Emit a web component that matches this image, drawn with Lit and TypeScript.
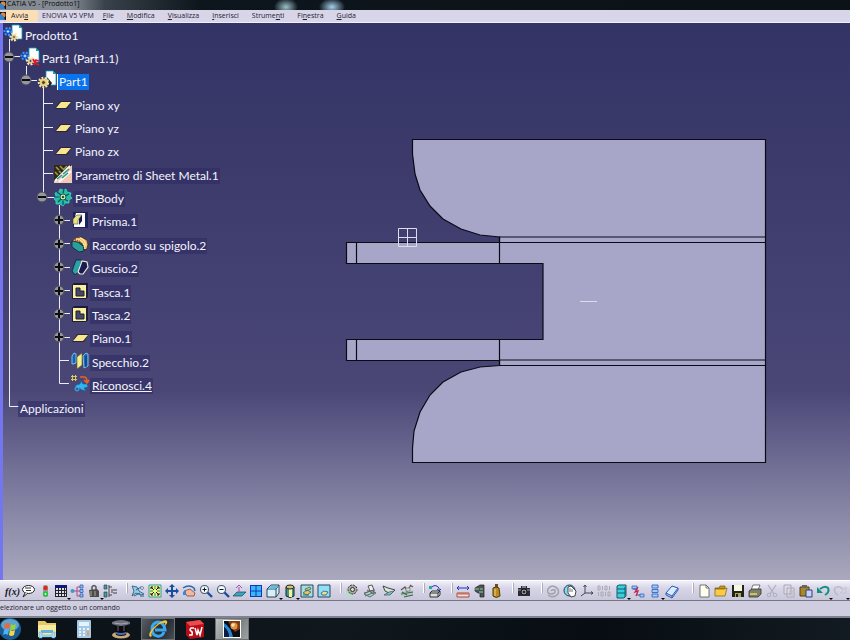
import { LitElement, html, svg, css, nothing } from "lit";
import { customElement } from "lit/decorators.js";
import { classMap } from "lit/directives/class-map.js";

const gear = (x: number, y: number, r: number, fill: string, edge: string, hole: string) => svg`
  <circle cx=${x} cy=${y} r=${r} fill="none" stroke=${edge} stroke-width="3" stroke-dasharray="1.7 1.2"/>
  <circle cx=${x} cy=${y} r=${r - 0.4} fill=${fill}/>
  <circle cx=${x} cy=${y} r=${r * 0.45} fill=${hole} stroke=${edge} stroke-width=".6"/>`;

const sheet = svg`<path d="M8 0h7l3 3v11H8z" fill="#fff" stroke="#15a0b4" stroke-width=".8"/><path d="M15 0v3h3" fill="#15a0b4"/>`;

/* Tree glyphs, drawn on an 18 by 18 grid. */
const treeIcons: Record<string, unknown> = {
  product: svg`${sheet}${gear(4, 6.5, 3, "#0a50c8", "#3c96ff", "#d8eeff")}${gear(10, 12, 3, "#e9cf86", "#f8e7ac", "#35356a")}`,
  instance: svg`${sheet}${gear(4, 8, 3, "#0a50c8", "#3c96ff", "#d8eeff")}${gear(9.5, 13, 3, "#e9cf86", "#f8e7ac", "#35356a")}<path d="M12 11l2 4 4 2M13 17l2-5 3 1" stroke="#e01828" stroke-width="1.8" fill="none"/>`,
  part: svg`${sheet}<path d="M9 6l5 6-3 5z" fill="#222"/>${gear(5.5, 11.5, 4.2, "#f0d47c", "#f8e49c", "#4a4020")}`,
  plane: svg`<path d="M1 14l5-8h12l-5 8z" fill="#2a2440"/><path d="M2 13l5-6h10l-5 6z" fill="#f8e68c"/>`,
  sheetmetal: svg`<path d="M0 0h18v18H0z" fill="#f3c9b4"/><path d="M0 0h18L2 16H0z" fill="#2d2a18"/><path d="M2 2l3 3M6 1l4 4M1 7l3 3M5 6l2 2M13 1l-3 3" stroke="#a89a48" stroke-width="1.5"/><path d="M1 16L16 1M5 17L17 6" stroke="#fff" stroke-width="2"/><path d="M3 14l5-4M9 9l6-5M8 13l6-5" stroke="#1c9a90" stroke-width="1.5"/>`,
  body: svg`<path d="M6 1l3 1 3-1 1 3 4 1-1 3 2 2-3 2v3l-4 0-2 3-3-2-4 0 0-3-2-2 2-3-1-3 4-1z" fill="#28bca4" stroke="#38d8bc" stroke-width=".8"/><path d="M3 4l4 3M1 9h4M4 14l3-3M10 1l-1 4M15 6l-4 2M14 13l-4-2M9 13v4" stroke="#0c4c6c" stroke-width="1.2"/><circle cx="9" cy="9" r="3" fill="#f0e890" stroke="#0c5c5c"/><circle cx="9" cy="9" r="1.3" fill="#164"/>`,
  pad: svg`<path d="M2 1h15v16H2z" fill="#20205a"/><path d="M5 2h9v14H3v-6z" fill="#fff"/><path d="M6 7l5-3v6l-3 4V8z" fill="#171750"/><path d="M2 8l4-4h5L7 9v4H2z" fill="#e9e27e" stroke="#333" stroke-width=".5"/>`,
  fillet: svg`<path d="M1 6l6 1 6 5v4l-5 1-7-5z" fill="#26a09a" stroke="#123" stroke-width=".8"/><path d="M1 6q5-5 9-4l6 3q2 4 0 9l-3 1q0-7-6-8z" fill="#f0b070" stroke="#322" stroke-width=".8"/><path d="M9 3q5 1 6 8M5 4q8 1 9 10" stroke="#ffe98c" stroke-width="1.3" fill="none"/><path d="M4 5q8 0 9 10" stroke="#222" stroke-dasharray="1 1" fill="none"/>`,
  shell: svg`<path d="M1 13l4-11h6L7 14l-3 3z" fill="#2aa0a8" stroke="#0b2230" stroke-width=".8"/><path d="M7 14l4-11 5 1 1 5-5 7H9z" fill="#1b1b50" stroke="#e8e8e0" stroke-width="1.2"/>`,
  pocket: svg`<path d="M1 3l2-2h14v14l-2 2H1z" fill="#1c1c3c"/><path d="M2 3h13v13H2z" fill="#f8f2a0"/><path d="M5 6h4v3h4v5H5z" fill="#44446e" stroke="#222"/>`,
  mirror: svg`<path d="M1 4l2-3 2 1v9l-3 1H1z" fill="#1860b4" stroke="#8ce0f4" stroke-width=".8"/><path d="M6 5l5-4v12l-5 4z" fill="#f6f090" stroke="#606020" stroke-width=".6"/><path d="M12 4l3-3 2 1v12l-4 2z" fill="#1c68bc" stroke="#8ce0f4" stroke-width=".8"/><path d="M15 4v11" stroke="#0c2c5c"/>`,
  recognise: svg`<path d="M1.5 0v6M4.500 0v6M0 1.500h6M0 4.500h6" stroke="#e0c860"/><path d="M9 2h4q3 0 3 5M13 5l3 3 2-3" stroke="#f06020" stroke-width="1.6" fill="none"/><path d="M5 10l4-1 1-3 2 3 4 0 1 3-4 1 2 3-4-1-3-2-4 1z" fill="#32b4ec" stroke="#1462a0" stroke-width=".6"/><circle cx="6" cy="14" r="2" fill="#1866b4" stroke="#5cc8f4" stroke-width=".7"/>`,
};

/* Toolbar glyphs, drawn on a 14 by 14 grid. */
const page = svg`<path d="M3 1h6l3 3v9H3z" fill="#fffff0" stroke="#555" stroke-width=".8"/><path d="M9 1v3h3" fill="none" stroke="#555" stroke-width=".8"/>`;
const lens = svg`<path d="M8 8l5 5" stroke="#1c4c9c" stroke-width="2.4"/><circle cx="5.5" cy="5.5" r="4" fill="#effcff" stroke="#456" stroke-width="1.1"/>`;
const barIcons: Record<string, unknown> = {
  formula: svg`<text x="0" y="11" class="fx">f(x)</text>`,
  comment: svg`<ellipse cx="7.500" cy="5.500" rx="6" ry="4" fill="#fff" stroke="#222"/><path d="M4 9l-2 4 5-4" fill="#fff" stroke="#222"/><path d="M4 4h6M5 6.500h5" stroke="#333"/>`,
  lights: svg`<rect x="5" y="1" width="5" height="12" rx="2" fill="#999"/><circle cx="7.500" cy="4" r="2.200" fill="#e02820"/><circle cx="7.500" cy="10" r="2.600" fill="#18c838"/><circle cx="7.500" cy="10" r="1" fill="#e0ffe0"/>`,
  table: svg`<path d="M1 1h12v12H1z" fill="#dde"/><path d="M1 1h12v3H1z" fill="#10187c"/><path d="M1.500 4v9M4.500 4v9M7.500 4v9M10.500 4v9M1 6.500h11M1 9.500h11M1 12.500h12M12.500 4v9" stroke="#222"/>`,
  graph: svg`<path d="M3 7h4M7 3v9M7 3h3M7 7h3M7 12h3" stroke="#b04a80" fill="none"/><circle cx="2.500" cy="7" r="2" fill="#4098c8"/><path d="M10 1h3v3h-3zM10 5.500h3v3h-3zM10 10h3v3h-3z" fill="#88c8f0" stroke="#2848b0" stroke-width=".7"/>`,
  lock: svg`<path d="M5 7V3q2-3 4 0v4" fill="none" stroke="#555" stroke-width="1.500"/><path d="M2 6l8-1 2 2v6H3z" fill="#4c4c48"/><path d="M4 7v5M8 7v5" stroke="#aaa898"/>`,
  rules: svg`<path d="M1 1h3v4H1zM1 8h3v5H1z" fill="#40a090" stroke="#234" stroke-width=".6"/><path d="M6 1v12M6 3h3M6 11h3M9 5v4M10 6h4M10 9h4" stroke="#444"/>`,
  fly: svg`<path d="M1 2l5 1 2 4 5 3-3 1-5-2-4 3 2-5z" fill="#8cd0e0" stroke="#245078" stroke-width=".8"/><path d="M5 6l5-3M3 12l6-3M9 12h4" stroke="#345c90"/><circle cx="11" cy="4" r="1.500" fill="#c8efe8" stroke="#345c90" stroke-width=".6"/>`,
  fit: svg`<path d="M1 1h12v12H1z" fill="#f4f488" stroke="#28a0a0"/><path d="M3 5V3h2M9 3h2v2M3 9v2h2M11 9v2H9M3 3l3 3M11 3L8 6M3 11l3-3M11 11L8 8" stroke="#111" fill="none"/><path d="M2 7h3M9 7h3M7 2v3M7 9v3" stroke="#189048"/>`,
  pan: svg`<path d="M7 0l3 3H8v3h3V4l3 3-3 3V8H8v3h2l-3 3-3-3h2V8H3v2L0 7l3-3v2h3V3H4z" fill="#16509c"/>`,
  rotate: svg`<path d="M1 4q6-4 11 0l1 3" fill="none" stroke="#2868b0" stroke-width="1.500"/><path d="M2 7l6-2 5 4-1 3H5z" fill="#f0b8a0" stroke="#843" stroke-width=".8"/><path d="M1 8l3-2v5H1z" fill="#3888d0"/>`,
  zoomin: svg`${lens}<path d="M3.500 5.500h4M5.500 3.500v4" stroke="#111"/>`,
  zoomout: svg`${lens}<path d="M3.500 5.500h4" stroke="#111"/>`,
  normal: svg`<path d="M1 12l4-4h9l-4 4z" fill="#38a8b8" stroke="#146" stroke-width=".7"/><path d="M7 9V3M4 4l3-3 3 3" stroke="#a850a0" fill="none"/>`,
  multi: svg`<path d="M1 1h12v12H1z" fill="#1038b8"/><path d="M2 2h4.500v4.500H2zM7.500 2H12v4.500H7.500zM2 7.500h4.500V12H2zM7.500 7.500H12V12H7.500z" fill="#38b8f8"/>`,
  iso: svg`<path d="M1 5l4-4h8v8l-3 4H1z" fill="#d4f0f8" stroke="#345"/><path d="M1 5h9v8M10 5l3-4" fill="none" stroke="#345"/><path d="M2 5l3-3h7l-3 3z" fill="#5cbce8"/>`,
  shade: svg`<path d="M3 3v9q4 3 8 0V3z" fill="#3a9890" stroke="#222"/><path d="M6 4h3v9H6z" fill="#f8f49c"/><ellipse cx="7" cy="3" rx="4" ry="2" fill="#cec56c" stroke="#222"/>`,
  hide: svg`<path d="M1 1h12v12H1z" fill="#a0e0e4" stroke="#345"/><path d="M5 5l5-2 1 2-5 2zM3 9l4-3 4 2-4 3z" fill="#eec84c" stroke="#367" stroke-width=".8"/><path d="M3 11h6" stroke="#367"/>`,
  swap: svg`<path d="M1 1h12v12H1z" fill="#8ce0f8" stroke="#345"/><path d="M4 9l3-2 4 1-2 3H5z" fill="#e8e090" stroke="#357" stroke-width=".8"/>`,
  cog: svg`<path d="M1 4h7v9H1z" fill="#b4dccc"/><circle cx="7.500" cy="5.500" r="4.500" fill="#aaa89c" stroke="#333" stroke-dasharray="2 1"/><circle cx="7.500" cy="5.500" r="2" fill="#ddd" stroke="#333"/>`,
  wallA: svg`<path d="M1 10l7-4 5 3-6 4z" fill="#a4d8cc" stroke="#345" stroke-width=".7"/><path d="M5 2l4-1 2 5-4 1z" fill="#eee" stroke="#555"/><path d="M1 9l11-3M2 12l10-4M4 6l7 4" stroke="#666" fill="none"/>`,
  wallB: svg`<path d="M1 2l5 2 7 2-4 4-6-3z" fill="#d6e8dc" stroke="#444"/><path d="M2 11l5-3 5-1-4 4z" fill="#7cc4ac" stroke="#456" stroke-width=".7"/>`,
  wallC: svg`<path d="M0 9q6-4 13-2v5H2z" fill="#9cd4cc"/><path d="M1 6l4-3 2 4 4-6M1 10l12-2M4 13l9-2M10 1l3 2M2 8l5 3" stroke="#605848" stroke-width="1.200" fill="none"/><path d="M6 4h4v3H6z" fill="#ddd" stroke="#666" stroke-width=".6"/>`,
  update: svg`<path d="M3 4q4-5 8 0v3M9 5l2 2 2-2" fill="none" stroke="#2438b0"/><path d="M1 2h3v3H1z" fill="#2ca8a0"/><path d="M2 9l2-2h8v4l-2 2H2z" fill="#ddd" stroke="#333"/><path d="M2 9h8v4M10 9l2-2" stroke="#333" fill="none"/>`,
  measure: svg`<path d="M1 4h12M3 2L1 4l2 2M11 2l2 2-2 2" stroke="#2038b8" fill="none"/><path d="M1 9h12v4H1z" fill="#f8e0c8" stroke="#a44"/><path d="M3 9v2M5 9v2M7 9v2M9 9v2M11 9v2" stroke="#a44" stroke-width=".8"/>`,
  clamp: svg`<path d="M2 4l5-3h4v12H7V9H5l-3-2z" fill="#4c5450" stroke="#222" stroke-width=".7"/><path d="M1 5h5M7 5h3M6 8h4" stroke="#8cc8b4"/>`,
  inertia: svg`<path d="M6 0h3v3H6z" fill="#665018"/><path d="M4 4q3-2 6 0l1 8q-4 3-7 0z" fill="#b88a20" stroke="#4c380c"/><path d="M6 5v7" stroke="#f0d470"/>`,
  camera: svg`<path d="M1 4h3V2h6v2h3v8H1z" fill="#292c32"/><path d="M5 3h4" stroke="#ccc"/><circle cx="7" cy="8" r="3" fill="#99a" stroke="#111"/><circle cx="7" cy="8" r="1.300" fill="#223"/><path d="M1 6h3M10 6h3" stroke="#999"/>`,
  swirl: svg`<path d="M12 5Q6-1 2 5q-2 5 4 5 4-1 3-4Q6 5 5 7M2 11q5 4 10-1 2-5-3-7" fill="none" stroke="#a0a0a8" stroke-width="1.400"/>`,
  clock: svg`<circle cx="6.500" cy="6.500" r="5.500" fill="#8cd8e8" stroke="#143c60"/><path d="M5 3l3-1 5 5-1 5-4 1-3-4z" fill="#fff" stroke="#222" stroke-width=".8"/><path d="M7 4v4M9 5v3" stroke="#333" stroke-width=".7"/>`,
  axis: svg`<path d="M5 2v7l-4 3M5 9h8M3.500 3L5 1l1.500 2M11 7.500L13 9l-2 1.500" fill="none" stroke="#445"/>`,
  binary: svg`<path d="M1 2h2v4H1zM5.500 2v4M8 2h2v4H8zM12.500 2v4M1.500 8v4M4 8h2v4H4zM8.500 8v4M11 8h2v4h-2z" fill="none" stroke="#aaa8b0"/>`,
  catalog: svg`<path d="M3 2l2-1h7v11l-2 2H3z" fill="#38d0dc" stroke="#185868"/><path d="M3 5h8M3 9h8M11 3v10" stroke="#185868"/>`,
  link: svg`<path d="M1 2h5v3H1zM9 10h4v3H9z" fill="#9ac8f0" stroke="#2858c0" stroke-width=".7"/><path d="M2 5h4v3M6 11h3" stroke="#2858c0" fill="none"/><path d="M7 3l-3 5 3-1-2 5" stroke="#d02038" stroke-width="1.300" fill="none"/>`,
  stack: svg`<path d="M4 1h6v3H4zM4 5.500h6v3H4zM4 10h6v3H4z" fill="#a0d0f4" stroke="#2858c0" stroke-width=".8"/>`,
  eraser: svg`<path d="M1 9l6-7 6 2-6 8z" fill="#d8ecff" stroke="#2858c0"/><path d="M1 9v2l6 3 6-8V4M7 12v2" fill="none" stroke="#2858c0"/>`,
  new: page,
  open: svg`<path d="M1 4h4l1-2h5v3H1z" fill="#c89820" stroke="#7c5a08" stroke-width=".7"/><path d="M1 12V5h9l3-1-2 8z" fill="#f8cc48" stroke="#7c5a08" stroke-width=".7"/>`,
  save: svg`<path d="M1 1h12v12H1z" fill="#20241c"/><path d="M3 1h8v6H3z" fill="#f8f8e0"/><path d="M4 9h6v4H4z" fill="#a8a850"/><path d="M5 10h2v3H5z" fill="#222"/>`,
  print: svg`<path d="M5 1h7l-2 5H3z" fill="#fff" stroke="#444" stroke-width=".7"/><path d="M1 7l3-2h9v5l-3 3H1z" fill="#7c8068" stroke="#333" stroke-width=".8"/><path d="M2 10h7" stroke="#e8dc60" stroke-width="1.500"/>`,
  cut: svg`<path d="M3 1l6 9M11 1L5 10" stroke="#b0aeba" stroke-width="1.200"/><circle cx="4" cy="11" r="1.800" fill="none" stroke="#b0aeba"/><circle cx="10" cy="11" r="1.800" fill="none" stroke="#b0aeba"/>`,
  copy: svg`<path d="M2 1h7v9H2zM5 4h7v9H5z" fill="#dcdae8" stroke="#aaa8b4"/><path d="M7 7h4M7 9h4M7 11h4" stroke="#b4b2be"/>`,
  paste: svg`<path d="M1 3h9v9H1z" fill="#a8862c" stroke="#54400c"/><path d="M3 1h5v3H3z" fill="#666"/><path d="M7 6h6v7H7z" fill="#c4d4f8" stroke="#303c80"/>`,
  undo: svg`<path d="M4 5q5-4 8-1 2 4-3 7" fill="none" stroke="#149080" stroke-width="2"/><path d="M1 3v6h6z" fill="#149080"/>`,
  redo: svg`<path d="M10 5Q5 1 2 4q-2 4 3 7" fill="none" stroke="#bcbac6" stroke-width="1.500"/><path d="M13 3v6H7z" fill="#d4d2de" stroke="#bcbac6" stroke-width=".6"/>`,
};

/* Names ending in "+" carry a drop-down arrow. */
const groups: string[][] = [
  ["formula", "comment", "lights", "table+", "graph", "lock+", "rules"],
  ["fly", "fit", "pan", "rotate", "zoomin", "zoomout", "normal", "multi", "iso+", "shade+", "hide", "swap"],
  ["cog", "wallA", "wallB", "wallC"],
  ["update"],
  ["measure", "clamp", "inertia"],
  ["camera"],
  ["swirl", "clock", "axis", "binary", "catalog+", "link", "stack+", "eraser"],
  ["new", "open", "save", "print", "cut", "copy", "paste", "undo+", "redo+"],
];

/* Taskbar glyphs, drawn on a 22 by 22 grid. */
const space = svg`<rect x="2" y="2" width="18" height="18" fill="#fff"/><rect x="3" y="3" width="16" height="16" fill="#0b0c14"/><path d="M7 3h12v8l-5 3-4-5z" fill="#7c3c14"/><circle cx="13" cy="8" r="3.500" fill="#e09040"/><circle cx="12" cy="7" r="1.800" fill="#ffe0a0"/><path d="M3 5q7 4 9 14H8Q7 12 3 9z" fill="#2c84d0"/><path d="M3 9q5 4 5 10H3z" fill="#0c1c40"/>`;
const taskIcons: Record<string, unknown> = {
  explorer: svg`<path d="M2 3h7l2 2h9v14H2z" fill="#e8c860"/><path d="M2 7h18v12H2z" fill="#f8e9a0"/><path d="M5 12h12v3H5z" fill="#64b4e0"/><path d="M3 20v-6h3v3h10v-3h3v6h-3v-1H6v1z" fill="#a8dcf4" stroke="#5c9cc8" stroke-width=".5"/>`,
  calc: svg`<rect x="4" y="2" width="14" height="18" rx="1" fill="#a4c8e4"/><path d="M6 4h10v4H6z" fill="#e4f4fc"/><path d="M6 11h10M6 14h10M6 17h10" stroke="#e8f4fc" stroke-width="2" stroke-dasharray="2 2"/><path d="M14 13h2v5h-2z" fill="#e0a060"/>`,
  hat: svg`<ellipse cx="11" cy="17" rx="9" ry="3.500" fill="#c8a878"/><path d="M4 5h14l-2 12q-5 2-10 0z" fill="#0c0c10"/><path d="M2 4q9-4 18 0v2q-9 4-18 0z" fill="#68708c"/><path d="M4 5q7 2 14 0" stroke="#b4a488" fill="none"/><path d="M6 14q5 2 10 0v2q-5 2-10 0z" fill="#446cc0"/><path d="M8 8v5M14 8v5" stroke="#666"/>`,
  ie: svg`<path d="M17 14q-2 5-7 4-5-1-5-7t6-7q6 0 7 8H8" fill="none" stroke="#38a8f0" stroke-width="3"/><path d="M3 19q-3-3 4-10Q17 0 20 3q1 2-2 5 1-4-2-3-4 0-9 6-4 5-2 7z" fill="#f4c434"/>`,
  sw: svg`<path d="M2 4l14-2 4 4v13L6 21l-4-4z" fill="#b80c18"/><path d="M2 4l14-2 4 4L6 8z" fill="#ec4c4c"/><path d="M10 10H7q-2 2 0 3t1 4H5M11 10l2 7 1-5 2 5 2-8" fill="none" stroke="#fff" stroke-width="1.500"/>`,
  catia: space,
};
const tasks: [string, string, boolean][] = [
  ["explorer", "Esplora risorse", false],
  ["calc", "Calcolatrice", false],
  ["hat", "Utilità", false],
  ["ie", "Internet Explorer", true],
  ["sw", "SolidWorks", false],
  ["catia", "CATIA V5", true],
];

interface Node {
  label: string;
  icon?: string;
  depth: number;
  toggle?: "plus" | "minus";
  look?: string;
}
const nodes: Node[] = [
  { label: "Prodotto1", icon: "product", depth: 0 },
  { label: "Part1 (Part1.1)", icon: "instance", depth: 1, toggle: "minus" },
  { label: "Part1", icon: "part", depth: 2, toggle: "minus", look: "selected" },
  { label: "Piano xy", icon: "plane", depth: 3 },
  { label: "Piano yz", icon: "plane", depth: 3 },
  { label: "Piano zx", icon: "plane", depth: 3 },
  { label: "Parametro di Sheet Metal.1", icon: "sheetmetal", depth: 3, look: "boxed" },
  { label: "PartBody", icon: "body", depth: 3, toggle: "minus", look: "boxed" },
  { label: "Prisma.1", icon: "pad", depth: 4, toggle: "plus", look: "boxed" },
  { label: "Raccordo su spigolo.2", icon: "fillet", depth: 4, toggle: "plus", look: "boxed" },
  { label: "Guscio.2", icon: "shell", depth: 4, toggle: "plus", look: "boxed" },
  { label: "Tasca.1", icon: "pocket", depth: 4, toggle: "plus", look: "boxed" },
  { label: "Tasca.2", icon: "pocket", depth: 4, toggle: "plus", look: "boxed" },
  { label: "Piano.1", icon: "plane", depth: 4, toggle: "plus", look: "boxed" },
  { label: "Specchio.2", icon: "mirror", depth: 4, look: "boxed" },
  { label: "Riconosci.4", icon: "recognise", depth: 4, look: "boxed current" },
  { label: "Applicazioni", depth: 0, look: "boxed" },
];

@customElement("spec-tree")
class SpecTree extends LitElement {
  static styles = css`
    :host { display: block; position: relative; width: max-content; }
    .lines { position: absolute; left: 0; top: 0; }
    .tree { position: relative; margin: 0; padding: 1px 0 0; list-style: none; display: grid; grid-template-rows: repeat(17, 1fr); height: 397px; font: 12px/16px Lato, "Open Sans", sans-serif; color: #f4f4fc; }
    .node { display: flex; align-items: center; white-space: nowrap; }
    .d0 { padding-left: 1px; }
    .d1 { padding-left: 1px; }
    .d2 { padding-left: 18px; }
    .d3 { padding-left: 34px; }
    .d4 { padding-left: 51px; }
    .bare { padding-left: 16px; }
    .toggle, .gap { width: 10px; height: 10px; margin: 0 7px 4px 0; flex: none; }
    .toggle { border: 0; padding: 0; background: none; }
    .toggle svg, .icon { display: block; }
    .toggle svg { overflow: visible; }
    .icon { width: 18px; height: 18px; margin: 0 2px 4px 0; flex: none; overflow: visible; }
    .label { padding: 0 1px; border-left: 1px solid transparent; margin-left: -1px; }
    .boxed { background: rgba(46, 44, 100, 0.6); }
    .selected { background: #0a74ee; border-color: #fff; }
    .current { text-decoration: underline; }
  `;
  render() {
    return html`
      <svg class="lines" width="240" height="397" viewBox="3 23 240 397" aria-hidden="true">
        <path fill="none" stroke="#ececf8" stroke-width="1" d="M9.500 39V406.500H19M9.500 56.500H20M26.500 66V80.500H37M43.500 88V197.500H54M43.500 103.500H53M43.500 127.500H53M43.500 150.500H53M43.500 173.500H53M59.500 205V383.500H69M59.500 220.500H70M59.500 243.500H70M59.500 267.500H70M59.500 290.500H70M59.500 313.500H70M59.500 337.500H70M59.500 360.500H69"/>
      </svg>
      <ul class="tree">
        ${nodes.map(
          (n) => html`<li class="node ${n.icon ? "d" + n.depth : "bare"}">
            ${n.toggle
              ? html`<button class="toggle" aria-label="${n.toggle === "plus" ? "Espandi" : "Comprimi"} ${n.label}">
                  <svg width="10" height="10" viewBox="0 0 10 10"><circle cx="5" cy="5" r="5" fill="#96969e" stroke="#4c4c58"/><path d=${n.toggle === "plus" ? "M1 5h8M5 1v8" : "M1 5h8"} stroke="#0c0c10" stroke-width="2"/></svg>
                </button>`
              : n.depth > 0
                ? html`<span class="gap"></span>`
                : nothing}
            ${n.icon ? html`<svg class="icon" viewBox="0 0 18 18" aria-hidden="true">${treeIcons[n.icon]}</svg>` : nothing}
            <span class="label ${n.look ?? ""}">${n.label}</span>
          </li>`
        )}
      </ul>`;
  }
}

@customElement("part-view")
class PartView extends LitElement {
  static styles = css`
    :host { display: block; }
    .drawing { display: block; width: 100%; height: 100%; }
  `;
  render() {
    return html`<svg class="drawing" viewBox="3 23 847 557" role="img" aria-label="Part1">
      <g fill="#a7a6c8" stroke="#0a0a14" stroke-width="1.200">
        <path d="M412.500 139.500H765.500V462.500H412.500V448L414 431 420 412 430 395 443 382 461 372 480 367 499.500 365.500V360.500H346.500V339.500H543V263.500H346.500V242.500H499.500V237L480 235 461 229 443 219 430 206 420 190 415 174 412.500 154Z"/>
        <path fill="none" d="M499 237H765.500M499 242.500H765.500M499 360H765.500M499 365.500H765.500M499.500 237V263.500M499.500 339.500V365.500M356.500 242.500V263.500M356.500 339.500V360.500"/>
      </g>
      <path d="M398.500 228.500H416.500V246.500H398.500ZM407.500 228.500V246.500M398.500 237.500H416.500M580 301.500H597" fill="none" stroke="#dcdcec"/>
    </svg>`;
  }
}

@customElement("app-root")
class AppRoot extends LitElement {
  static styles = css`
    :host { display: flex; flex-direction: column; min-height: 100vh; overflow: hidden; background: #a9a8be; font: 7px/10px "Open Sans", "Noto Sans", sans-serif; color: #24222e; }
    button { font: inherit; color: inherit; border: 0; padding: 0; background: none; }
    .title { display: flex; align-items: center; gap: 1px; height: 10px; flex: none; color: #0a0c10; background: radial-gradient(ellipse 12px 9px at 286px 7px, #9cc0c8, transparent), radial-gradient(ellipse 13px 9px at 332px 7px, #a4d0e8, transparent), linear-gradient(90deg, #858b92 0, #858b92 70px, #39424a 105px, #0d161c 200px, #0b1218 100%); }
    .title h1 { font: inherit; margin: 0; padding: 0 0 3px; }
    .app { width: 6px; height: 8px; flex: none; }
    .menu { display: flex; align-items: stretch; height: 12px; flex: none; background: #d8d5e8; border-bottom: 1px solid #f0eefa; }
    .menu .app { margin-top: 2px; }
    .menu button { line-height: 12px; padding: 0 6px 0 7px; white-space: nowrap; }
    .menu .start { background: #fbdfb4; padding: 0 10px 0 5px; margin-right: -3px; }
    .menu .vendor { padding-right: 2px; }
    .view { position: relative; flex: 1; min-height: 420px; border-left: 3px solid #7675f0; background: linear-gradient(#333366 0, #3d3c6c 30%, #4a4777 66%, #77769a 82%, #a9a8be 100%); }
    .model { position: absolute; inset: 0; }
    .tools { display: grid; grid-template-columns: 126fr 214fr 83fr 28fr 61fr 29fr 151fr 158fr; height: 21px; flex: none; border-top: 1px solid #fff; box-sizing: border-box; background: linear-gradient(#f0eff8, #d6d4e6 40%, #c9c7da); border-bottom: 1px solid #777686; }
    .group { display: flex; align-items: center; justify-content: space-between; min-width: 0; padding: 0 8px 0 4px; background: linear-gradient(90deg, #fff 1px, #aeacbc 1px) 0 2px / 2px 10px no-repeat; }
    .group:first-child { background: none; }
    .group:nth-child(7) { padding-right: 12px; }
    .group:nth-child(8) { padding-right: 2px; }
    .tool { position: relative; width: 16px; height: 16px; flex: none; }
    .tool svg { display: block; width: 14px; height: 14px; margin: 1px; overflow: visible; }
    .drop::after { content: ""; position: absolute; right: -2px; bottom: -1px; border: 2px solid transparent; border-top-color: #000; border-bottom: 0; }
    .fx { font: italic bold 10px "Liberation Serif", serif; fill: #15151c; }
    .status { height: 15px; flex: none; line-height: 14px; background: #cfcde0; border-bottom: 2px solid #7f8290; white-space: nowrap; }
    .tasks { display: flex; align-items: center; gap: 3px; height: 22px; flex: none; background: linear-gradient(100deg, #0a1218, #10181e 40%, #070d12 70%, #131b22); }
    .orb { width: 21px; height: 22px; margin-right: 6px; flex: none; }
    .orb svg, .task svg { display: block; }
    .task { width: 34px; height: 22px; display: grid; place-items: center; flex: none; }
    .task svg { width: 22px; height: 22px; }
    .on { background: linear-gradient(120deg, #5a6066, #23292e 60%, #4c5258); box-shadow: inset 0 0 0 1px #6c7278; }
    .on:last-child { background: linear-gradient(120deg, #c0c4c4, #7b8080 60%, #a2a6a6); }
  `;

  private item(before: string, key: string, after: string) {
    return html`<button>${before}<u>${key}</u>${after}</button>`;
  }

  render() {
    const logo = html`<svg class="app" viewBox="0 0 6 8" aria-hidden="true"><rect width="6" height="8" fill="#101018"/><circle cx="3" cy="3" r="2.500" fill="#e08838"/><path d="M0 2q4 1 5 6H0z" fill="#3880c8"/></svg>`;
    return html`
      <header class="title">${logo}<h1>CATIA V5 - [Prodotto1]</h1></header>
      <nav class="menu">
        ${logo}
        <button class="start">Avvi<u>a</u></button>
        <button class="vendor">ENOVIA V5 VPM</button>
        ${this.item("", "F", "ile")}${this.item("", "M", "odifica")}${this.item("", "V", "isualizza")}
        ${this.item("", "I", "nserisci")}${this.item("Strume", "n", "ti")}${this.item("Fi", "n", "estra")}${this.item("", "G", "uida")}
      </nav>
      <main class="view">
        <part-view class="model"></part-view>
        <spec-tree></spec-tree>
      </main>
      <div class="tools" role="toolbar">
        ${groups.map(
          (g) => html`<div class="group">
            ${g.map((name) => {
              const key = name.replace("+", "");
              return html`<button class=${classMap({ tool: true, drop: key !== name })} aria-label=${key}>
                <svg viewBox="0 0 14 14" aria-hidden="true">${barIcons[key]}</svg>
              </button>`;
            })}
          </div>`
        )}
      </div>
      <div class="status">elezionare un oggetto o un comando</div>
      <footer class="tasks">
        <button class="orb" aria-label="Start">
          <svg width="21" height="22" viewBox="0 0 21 22"><circle cx="10" cy="11" r="11" fill="#1c5c94"/><ellipse cx="10" cy="7" rx="9" ry="6" fill="#5ca4cc"/><path d="M5 6q3-2 5 0l-1 5q-2-2-5 0z" fill="#f0643c"/><path d="M11 6q2 2 5 0l-1 5q-3 2-5 0z" fill="#9cd03c"/><path d="M4 12q3-2 5 0l-1 5q-3-2-5 0z" fill="#48b4f0"/><path d="M10 12q2 2 5 0l-1 5q-3 2-5 0z" fill="#fcd440"/></svg>
        </button>
        ${tasks.map(
          ([key, label, on]) => html`<button class=${classMap({ task: true, on })} aria-label=${label}>
            <svg viewBox="0 0 22 22" aria-hidden="true">${taskIcons[key]}</svg>
          </button>`
        )}
      </footer>`;
  }
}
